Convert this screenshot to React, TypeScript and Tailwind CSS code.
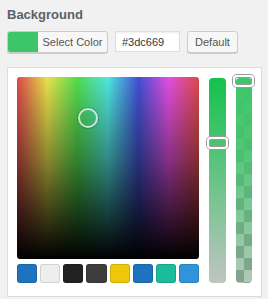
const swatches = ["#1e73be", "#eeeeee", "#222222", "#3d3d3d", "#eec70b", "#1e73be", "#1abc9c", "#3194da"];

export default function App() {
  return (
    <div className="w-[268px] h-[299px] bg-[#f1f1f1] px-[7px] pt-[7px] font-['Liberation_Sans',Arial,sans-serif]">
      <h3 className="text-[13px] font-bold leading-[16px] text-[#5b6168]">Background</h3>

      <div className="mt-[8px] flex items-start">
        {/* color toggle button */}
        <button className="flex h-[22px] w-[101px] overflow-hidden rounded-[3px] border border-[#cccccc] bg-[#f7f7f7] shadow-[0_1px_0_#cccccc]">
          <span className="h-full w-[30px] shrink-0 bg-[#3dc669]" />
          <span className="flex-1 text-center text-[11px] leading-[20px] text-[#555555]">Select Color</span>
        </button>
        <input
          readOnly
          value="#3dc669"
          className="ml-[7px] h-[21px] w-[65px] border border-[#dddddd] bg-white pl-[6px] text-[11px] text-[#32373c] shadow-[inset_0_1px_2px_rgba(0,0,0,0.07)] outline-none"
        />
        <button className="ml-[7px] h-[22px] w-[51px] rounded-[3px] border border-[#cccccc] bg-[#f7f7f7] text-[11px] leading-[20px] text-[#555555] shadow-[0_1px_0_#cccccc]">
          Default
        </button>
      </div>

      <div className="mt-[14px] flex h-[230px] w-[255px] border border-[#dcdcde] bg-white pl-[9px] pt-[9px]">
        <div className="w-[182px]">
          <div className="relative h-[182px] w-[182px] rounded-[3px] bg-[image:linear-gradient(to_bottom,rgba(0,0,0,0)_0%,rgba(0,0,0,0.4)_45%,#000_100%),linear-gradient(to_right,#dc4a4a,#e9e24c,#4fdc4f,#4fe6df,#4150d4,#e24fe0,#dc4a4a)]">
            <div className="absolute left-[61px] top-[31px] h-[20px] w-[20px] rounded-full border-2 border-white/70 shadow-[0_0_0_1px_rgba(0,0,0,0.15)]" />
          </div>
          <div className="mt-[5px] grid grid-cols-8 gap-[3px]">
            {swatches.map((c, i) => (
              <div
                key={i}
                className="h-[19px] rounded-[3px] shadow-[inset_0_0_0_1px_rgba(0,0,0,0.12)]"
                style={{ backgroundColor: c }}
              />
            ))}
          </div>
        </div>

        {/* saturation slider */}
        <div className="relative ml-[10px] mt-[1px] h-[205px] w-[17px] rounded-[4px] bg-[image:linear-gradient(to_bottom,#14c24c,#bfc5c1)]">
          <div className="absolute left-[-2px] top-[59px] h-[12px] w-[21px] rounded-[4px] border-2 border-white shadow-[0_0_0_1px_#9a9a9a,inset_0_0_0_1px_#9a9a9a]" />
        </div>

        {/* alpha slider */}
        <div className="relative ml-[10px] mt-[1px] h-[205px] w-[16px] rounded-[4px] bg-[image:linear-gradient(to_bottom,rgba(61,198,105,1)_0%,rgba(61,198,105,0.85)_35%,rgba(61,198,105,0.15)_100%),conic-gradient(#c6c9c7_25%,#969a98_0_50%,#c6c9c7_0_75%,#969a98_0)] bg-[length:100%_100%,16px_24px]">
          <div className="absolute left-[-3px] top-[-3px] h-[12px] w-[21px] rounded-[4px] border-2 border-white shadow-[0_0_0_1px_#9a9a9a,inset_0_0_0_1px_#9a9a9a]" />
        </div>
      </div>
    </div>
  );
}
